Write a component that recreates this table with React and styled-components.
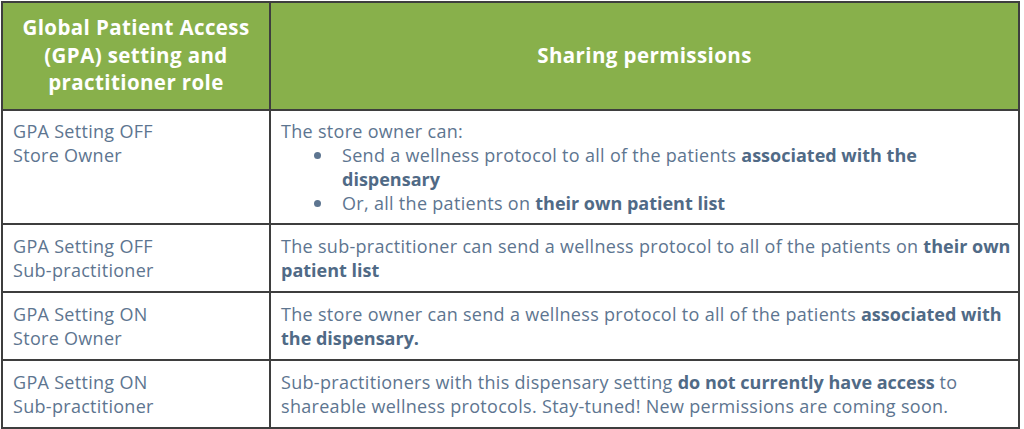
import React from 'react'
import styled, { createGlobalStyle } from 'styled-components'

const GlobalStyle = createGlobalStyle`
  body {
    margin: 0;
    background: #fff;
    font-family: "Open Sans", Lato, sans-serif;
  }
`

const Wrapper = styled.div`
  padding: 1px 3px 0 1px;
`

const Table = styled.table`
  width: 1019px;
  border-collapse: collapse;
  table-layout: fixed;
`

const HeadCell = styled.th`
  background-color: #88b04b;
  color: #fff;
  font-weight: 700;
  font-size: 20.5px;
  letter-spacing: 0.4px;
  line-height: 27.5px;
  text-align: center;
  border: 2px solid #3e3e3e;
  padding: 11px 8px 12px;
  width: ${props => props.width || 'auto'};
`

const Cell = styled.td`
  color: #5d7590;
  font-size: 18px;
  letter-spacing: 0.3px;
  line-height: 24px;
  vertical-align: top;
  border: 2px solid #3e3e3e;
  padding: ${props => props.tall ? '8px 6px 8px 10px' : '9px 6px 9px 10px'};

  & b {
    color: #506a86;
    font-weight: 700;
    letter-spacing: 0;
  }
`

const List = styled.ul`
  margin: 0;
  padding-left: 61px;
  list-style: none;
`

const Item = styled.li`
  position: relative;

  &::before {
    content: '';
    position: absolute;
    left: -28px;
    top: 9px;
    width: 7px;
    height: 7px;
    border-radius: 50%;
    background: #5d7590;
  }
`

const rows = [
  {
    role: ['GPA Setting OFF', 'Store Owner'],
    tall: true,
    body: (
      <>
        The store owner can:
        <List>
          <Item>Send a wellness protocol to all of the patients <b>associated with the dispensary</b></Item>
          <Item>Or, all the patients on <b>their own patient list</b></Item>
        </List>
      </>
    )
  },
  {
    role: ['GPA Setting OFF', 'Sub-practitioner'],
    body: <>The sub-practitioner can send a wellness protocol to all of the patients on <b>their own patient list</b></>
  },
  {
    role: ['GPA Setting ON', 'Store Owner'],
    body: <>The store owner can send a wellness protocol to all of the patients <b>associated with the dispensary.</b></>
  },
  {
    role: ['GPA Setting ON', 'Sub-practitioner'],
    body: <>Sub-practitioners with this dispensary setting <b>do not currently have access</b> to shareable wellness protocols. Stay-tuned! New permissions are coming soon.</>
  }
]

const App = () => {
  return (
    <Wrapper>
      <GlobalStyle />
      <Table>
        <thead>
          <tr>
            <HeadCell width='250px'>Global Patient Access (GPA) setting and practitioner role</HeadCell>
            <HeadCell>Sharing permissions</HeadCell>
          </tr>
        </thead>
        <tbody>
          {rows.map((row, i) => (
            <tr key={i}>
              <Cell tall={row.tall}>{row.role[0]}<br />{row.role[1]}</Cell>
              <Cell tall={row.tall}>{row.body}</Cell>
            </tr>
          ))}
        </tbody>
      </Table>
    </Wrapper>
  )
}

export default App
